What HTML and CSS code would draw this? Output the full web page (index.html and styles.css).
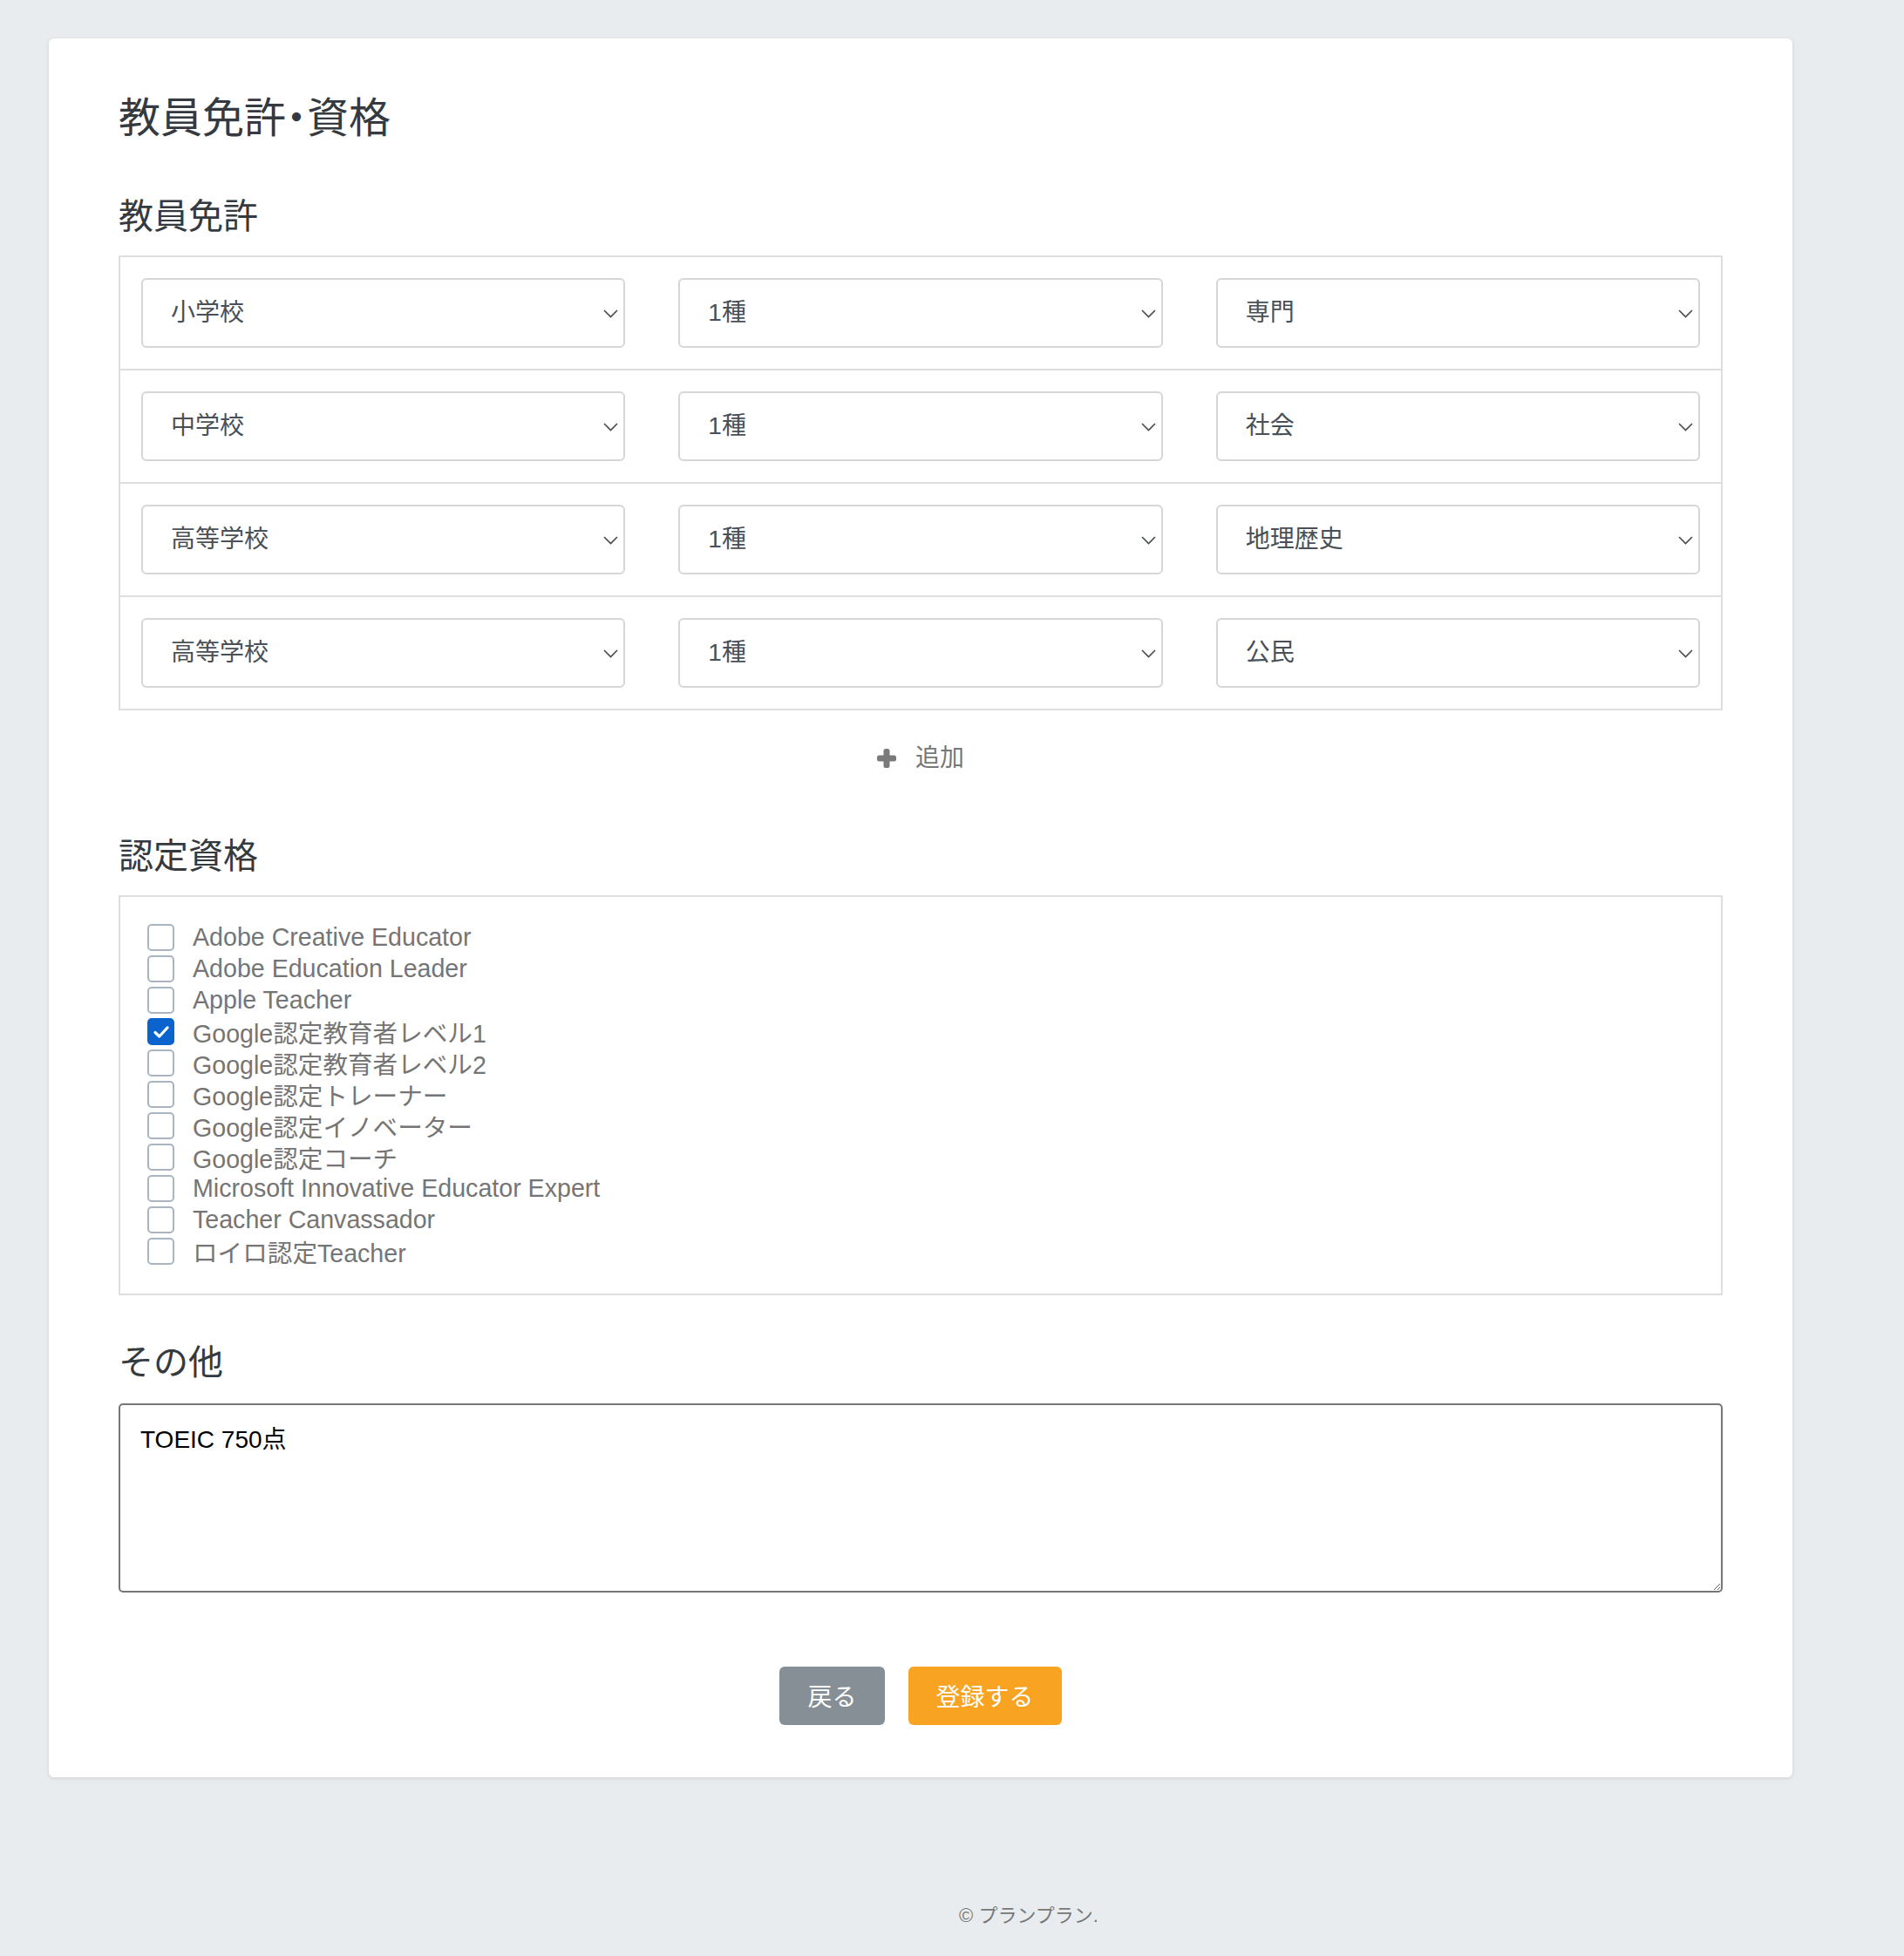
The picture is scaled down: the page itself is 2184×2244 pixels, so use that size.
FILE: index.html
```html
<!DOCTYPE html>
<html lang="ja">
<head>
<meta charset="utf-8">
<title>教員免許・資格</title>
<link rel="stylesheet" href="styles.css">
</head>
<body>
<main class="page">
  <section class="card">
    <h1 class="page-title">教員免許・資格</h1>

    <h2 class="section-title first">教員免許</h2>
    <div class="license-table">
      <div class="license-row">
        <div class="select-wrap"><select class="form-select"><option>小学校</option></select><svg class="chevron" width="17" height="10" viewBox="0 0 17 10"><polyline points="1,1 8.5,8.5 16,1"/></svg></div>
        <div class="select-wrap"><select class="form-select"><option>1種</option></select><svg class="chevron" width="17" height="10" viewBox="0 0 17 10"><polyline points="1,1 8.5,8.5 16,1"/></svg></div>
        <div class="select-wrap"><select class="form-select"><option>専門</option></select><svg class="chevron" width="17" height="10" viewBox="0 0 17 10"><polyline points="1,1 8.5,8.5 16,1"/></svg></div>
      </div>
      <div class="license-row">
        <div class="select-wrap"><select class="form-select"><option>中学校</option></select><svg class="chevron" width="17" height="10" viewBox="0 0 17 10"><polyline points="1,1 8.5,8.5 16,1"/></svg></div>
        <div class="select-wrap"><select class="form-select"><option>1種</option></select><svg class="chevron" width="17" height="10" viewBox="0 0 17 10"><polyline points="1,1 8.5,8.5 16,1"/></svg></div>
        <div class="select-wrap"><select class="form-select"><option>社会</option></select><svg class="chevron" width="17" height="10" viewBox="0 0 17 10"><polyline points="1,1 8.5,8.5 16,1"/></svg></div>
      </div>
      <div class="license-row">
        <div class="select-wrap"><select class="form-select"><option>高等学校</option></select><svg class="chevron" width="17" height="10" viewBox="0 0 17 10"><polyline points="1,1 8.5,8.5 16,1"/></svg></div>
        <div class="select-wrap"><select class="form-select"><option>1種</option></select><svg class="chevron" width="17" height="10" viewBox="0 0 17 10"><polyline points="1,1 8.5,8.5 16,1"/></svg></div>
        <div class="select-wrap"><select class="form-select"><option>地理歴史</option></select><svg class="chevron" width="17" height="10" viewBox="0 0 17 10"><polyline points="1,1 8.5,8.5 16,1"/></svg></div>
      </div>
      <div class="license-row">
        <div class="select-wrap"><select class="form-select"><option>高等学校</option></select><svg class="chevron" width="17" height="10" viewBox="0 0 17 10"><polyline points="1,1 8.5,8.5 16,1"/></svg></div>
        <div class="select-wrap"><select class="form-select"><option>1種</option></select><svg class="chevron" width="17" height="10" viewBox="0 0 17 10"><polyline points="1,1 8.5,8.5 16,1"/></svg></div>
        <div class="select-wrap"><select class="form-select"><option>公民</option></select><svg class="chevron" width="17" height="10" viewBox="0 0 17 10"><polyline points="1,1 8.5,8.5 16,1"/></svg></div>
      </div>
    </div>

    <div class="add-row">
      <button class="add-btn" type="button">
        <svg class="plus" width="22" height="22" viewBox="0 0 22 22"><rect x="7.5" y="0" width="7" height="22" rx="2.5"/><rect x="0" y="7.5" width="22" height="7" rx="2.5"/></svg>
        <span>追加</span>
      </button>
    </div>

    <h2 class="section-title after-add">認定資格</h2>
    <div class="cert-box">
      <label class="cert-item"><span class="check"></span><span>Adobe Creative Educator</span></label>
      <label class="cert-item"><span class="check"></span><span>Adobe Education Leader</span></label>
      <label class="cert-item"><span class="check"></span><span>Apple Teacher</span></label>
      <label class="cert-item"><span class="check checked"><svg width="18" height="14" viewBox="0 0 18 14"><polyline points="2,7.5 6.8,12 16,2"/></svg></span><span>Google認定教育者レベル1</span></label>
      <label class="cert-item"><span class="check"></span><span>Google認定教育者レベル2</span></label>
      <label class="cert-item"><span class="check"></span><span>Google認定トレーナー</span></label>
      <label class="cert-item"><span class="check"></span><span>Google認定イノベーター</span></label>
      <label class="cert-item"><span class="check"></span><span>Google認定コーチ</span></label>
      <label class="cert-item"><span class="check"></span><span>Microsoft Innovative Educator Expert</span></label>
      <label class="cert-item"><span class="check"></span><span>Teacher Canvassador</span></label>
      <label class="cert-item"><span class="check"></span><span>ロイロ認定Teacher</span></label>
    </div>

    <h2 class="section-title after-cert">その他</h2>
    <textarea class="other-text">TOEIC 750点</textarea>

    <div class="actions">
      <button class="btn btn-back" type="button">戻る</button>
      <button class="btn btn-submit" type="button">登録する</button>
    </div>
  </section>

  <footer class="footer">© プランプラン.</footer>
</main>
</body>
</html>
```

FILE: styles.css
```css
* {
  box-sizing: border-box;
}

body {
  margin: 0;
  background: #e9ecef;
  font-family: "Liberation Sans", "Noto Sans CJK JP", sans-serif;
  color: #343a40;
}

.page {
  padding-top: 44px;
  padding-bottom: 30px;
}

.card {
  margin: 0 128px 0 56px;
  background: #fff;
  border-radius: 6px;
  box-shadow: 0 1px 4px rgba(0, 0, 0, 0.12);
  padding: 63px 80px 60px;
}

.page-title {
  margin: 0;
  font-size: 48px;
  font-weight: 400;
  line-height: 1.2;
  font-feature-settings: "palt";
}

.section-title {
  margin: 0 0 21px;
  font-size: 40px;
  font-weight: 400;
  line-height: 1.2;
}

.section-title.first {
  margin-top: 59px;
}

.section-title.after-add {
  margin-top: 67px;
}

.section-title.after-cert {
  margin-top: 53px;
  margin-bottom: 23px;
}

/* license table */
.license-table {
  border: 2px solid #dedede;
}

.license-row {
  display: grid;
  grid-template-columns: repeat(3, 1fr);
  column-gap: 61px;
  padding: 24px;
}

.license-row + .license-row {
  border-top: 2px solid #dedede;
}

.select-wrap {
  position: relative;
}

.form-select {
  appearance: none;
  -webkit-appearance: none;
  display: block;
  width: 100%;
  height: 80px;
  margin: 0;
  padding: 0 48px 0 32px;
  border: 2px solid #d6d6d6;
  border-radius: 6px;
  background: #fff;
  font-family: inherit;
  font-size: 28px;
  color: #495057;
}

.chevron {
  position: absolute;
  right: 8px;
  top: 50%;
  margin-top: -4px;
  fill: none;
  stroke: #464b50;
  stroke-width: 1.6;
  pointer-events: none;
}

/* add */
.add-row {
  display: flex;
  justify-content: center;
  margin-top: 34px;
}

.add-btn {
  display: inline-flex;
  align-items: center;
  gap: 22px;
  padding: 0;
  border: 0;
  background: none;
  font-family: inherit;
  font-size: 28px;
  line-height: 42px;
  color: #777;
}

.plus {
  fill: #7a7a7a;
}

/* certifications */
.cert-box {
  border: 2px solid #dedede;
  padding: 29px 31px 30px;
}

.cert-item {
  display: flex;
  align-items: center;
  gap: 21px;
  height: 36px;
  font-size: 28.6px;
  color: #757575;
}

.check {
  flex: none;
  width: 31px;
  height: 31px;
  border: 2px solid #aab4c0;
  border-radius: 5px;
  background: #fff;
  display: flex;
  align-items: center;
  justify-content: center;
}

.check.checked {
  background: #0b63ce;
  border-color: #0b63ce;
}

.check svg {
  fill: none;
  stroke: #fff;
  stroke-width: 3.2;
  stroke-linecap: round;
  stroke-linejoin: round;
}

/* other */
.other-text {
  display: block;
  width: 100%;
  height: 217px;
  margin: 0;
  padding: 22px 23px 20px;
  border: 2px solid #767676;
  border-radius: 5px;
  font-family: "Liberation Sans", "Noto Sans CJK JP", sans-serif;
  font-size: 28px;
  line-height: 1.3;
  color: #000;
  resize: vertical;
}

/* actions */
.actions {
  display: flex;
  justify-content: center;
  gap: 27px;
  margin-top: 85px;
}

.btn {
  height: 67px;
  padding: 0 32px;
  border: 0;
  border-radius: 6px;
  font-family: inherit;
  font-size: 28px;
  color: #fff;
}

.btn-back {
  background: #868e96;
}

.btn-submit {
  background: #f9a322;
}

/* footer */
.footer {
  margin-top: 142px;
  padding-left: 176px;
  text-align: center;
  font-size: 22px;
  line-height: 33px;
  color: #777;
}
```
